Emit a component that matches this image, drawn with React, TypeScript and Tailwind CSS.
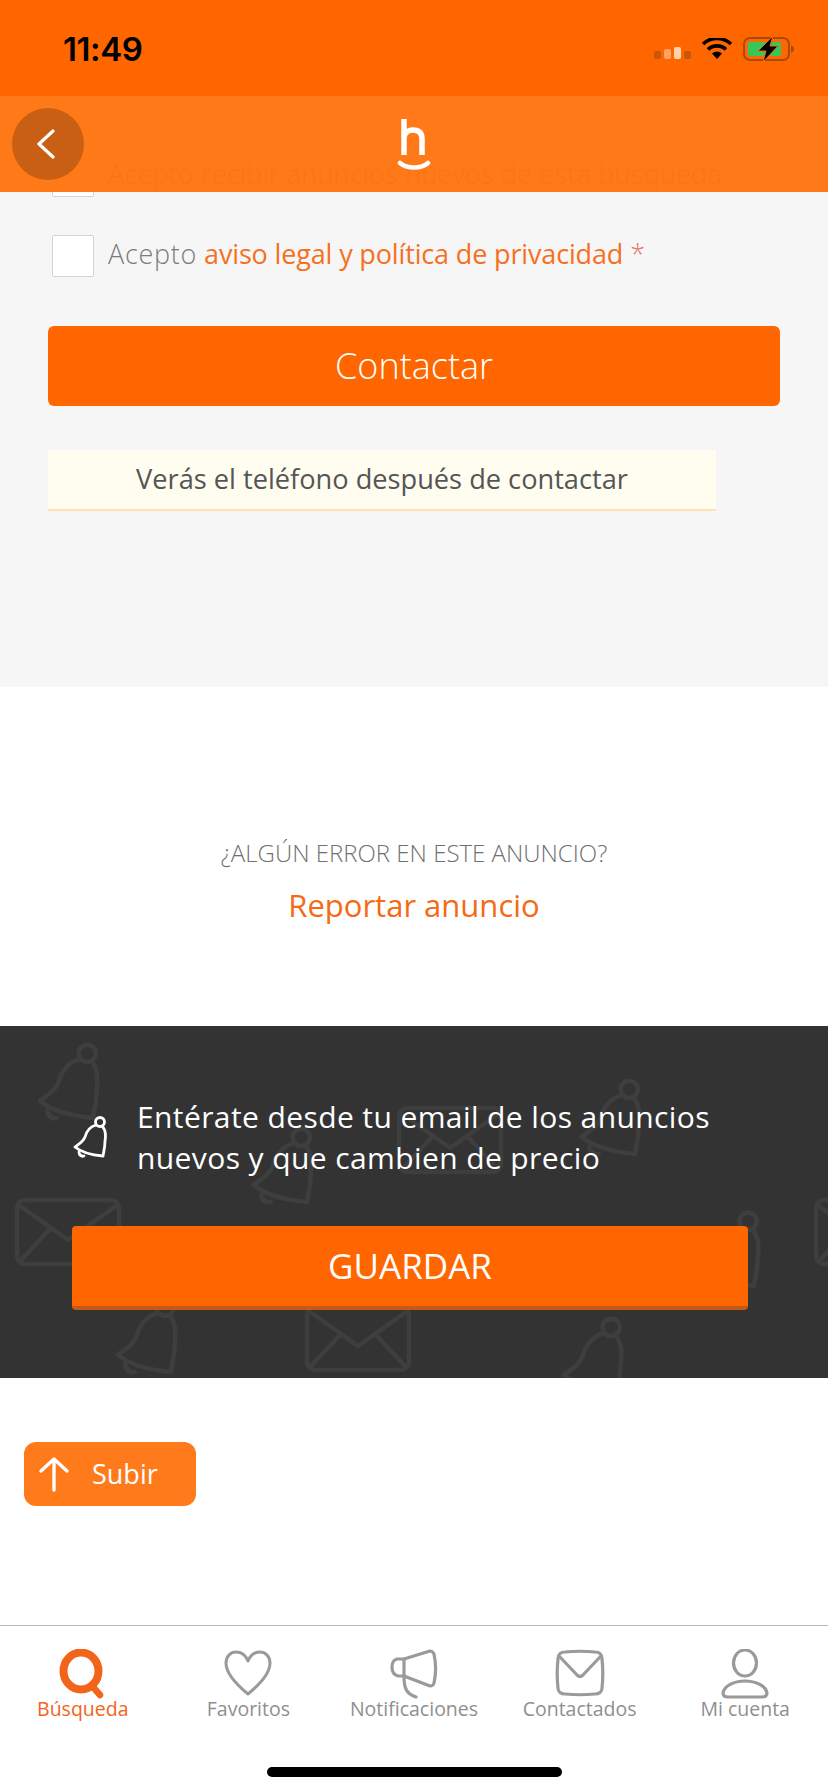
import React from 'react'

const ubuntu = "font-['Open_Sans','Noto_Sans',sans-serif]"

const Bell = ({ x, y, s = 1.9 }: { x: number; y: number; s?: number }) => (
  <g transform={`translate(${x} ${y}) scale(${s})`} fill="none" stroke="currentColor" strokeWidth="2.400" strokeLinejoin="round" strokeLinecap="round">
    <circle cx="28" cy="7" r="4.500" />
    <path d="M24 10c-7 2-10 8-11 12-2 5-6 7-10 10 6 5 16 8 28 9 1-6 2-9 2-15 1-6 0-12-3-15" />
    <path d="M7 37c0 3 2 5 5 4" fill="currentColor" />
  </g>
)

const Mail = ({ x, y }: { x: number; y: number }) => (
  <g transform={`translate(${x} ${y})`} fill="none" stroke="currentColor" strokeWidth="4.500" strokeLinejoin="round" strokeLinecap="round">
    <rect x="0" y="0" width="102" height="64" rx="8" />
    <path d="M3 6l48 34 48-34M4 60l30-32M98 60L68 28" />
  </g>
)

const navItems = [
  {
    label: 'Búsqueda',
    active: true,
    icon: (
      <svg viewBox="0 0 50 50" className="w-[50px] h-[50px]" fill="none" stroke="#f26419" strokeLinecap="round">
        <ellipse cx="23" cy="22" rx="17.500" ry="18.500" strokeWidth="8" />
        <path d="M35 38l7 8" strokeWidth="6.500" />
      </svg>
    ),
  },
  {
    label: 'Favoritos',
    icon: (
      <svg viewBox="0 0 50 50" className="w-[50px] h-[50px]" fill="none" stroke="#9a9a9a" strokeWidth="3" strokeLinejoin="round" strokeLinecap="round">
        <path d="M25 45C14 36 3 25 3 14 3 7 8 3 13 3c6 0 10 4 12 9 2-5 6-9 12-9 5 0 10 4 10 11 0 11-11 22-22 31z" />
      </svg>
    ),
  },
  {
    label: 'Notificaciones',
    icon: (
      <svg viewBox="0 0 50 50" className="w-[50px] h-[50px]" fill="none" stroke="#9a9a9a" strokeWidth="3.200" strokeLinejoin="round" strokeLinecap="round">
        <path d="M15 10L41 2c2 0 3 1 4 3 2 9 2 20 0 29-1 3-2 3-4 3L15 27" />
        <path d="M15 10H8c-4 1-5 4-5 8 0 5 2 8 6 9h6M15 10v18c0 12 3 17 12 20" />
      </svg>
    ),
  },
  {
    label: 'Contactados',
    icon: (
      <svg viewBox="0 0 50 50" className="w-[50px] h-[50px]" fill="none" stroke="#9a9a9a" strokeWidth="3.200" strokeLinejoin="round" strokeLinecap="round">
        <path d="M3 10c0-5 3-7 7-7 10-1 20-1 30 0 4 0 7 2 7 7 1 9 1 20 0 29 0 4-3 6-7 6-10 1-20 1-30 0-4 0-7-2-7-6-1-9-1-20 0-29z" />
        <path d="M5 8l17 18c2 2 4 2 6 0L45 8" />
      </svg>
    ),
  },
  {
    label: 'Mi cuenta',
    icon: (
      <svg viewBox="0 0 50 50" className="w-[50px] h-[50px]" fill="none" stroke="#9a9a9a" strokeWidth="3.200" strokeLinejoin="round">
        <ellipse cx="25" cy="14" rx="11.500" ry="13" />
        <path d="M25 32c-11 0-21 5-22 12 0 3 2 4 5 4h34c3 0 5-1 5-4-1-7-11-12-22-12z" />
      </svg>
    ),
  },
]

export default function App() {
  return (
    <div className={`relative w-[828px] h-[1792px] overflow-hidden bg-white flex flex-col ${ubuntu}`}>
      {/* status bar + translucent header, pinned over the scrolled page */}
      <div className="absolute top-0 left-0 right-0 z-10">
        <div className="h-[96px] bg-[#ff6600] flex items-center justify-between pl-[63px] pr-[33px] pt-[2px]">
          <span className="font-['Inter',sans-serif] text-[33px] font-semibold leading-none text-black tracking-[-0.4px]">11:49</span>
          <div className="flex items-center">
            <svg width="38" height="14" viewBox="0 0 38 14" className="mr-[9px] mt-[9px]">
              <rect x="0" y="4" width="7" height="8" rx="2" fill="#c9560a" />
              <rect x="10" y="2" width="7" height="10" rx="2" fill="#ffa366" />
              <rect x="20" y="0" width="7" height="12" rx="2" fill="#ffd2b0" />
              <rect x="30" y="4" width="7" height="8" rx="2" fill="#c9560a" />
            </svg>
            <svg width="32" height="22" viewBox="0 0 32 22" className="mr-[10px]">
              <path d="M16 21l-5-5.500a7 7 0 0 1 10 0z" fill="#000" />
              <path d="M7 11.500a13 13 0 0 1 18 0M2 6a20.500 20.500 0 0 1 28 0" fill="none" stroke="#000" strokeWidth="3.600" />
            </svg>
            <svg width="52" height="26" viewBox="0 0 52 26">
              <rect x="1" y="2" width="45" height="22" rx="6" fill="none" stroke="#a84a0c" strokeWidth="2" />
              <rect x="5" y="6" width="33" height="14" rx="2" fill="#34c759" />
              <path d="M48 9.500c2 .5 3 2 3 3.500s-1 3-3 3.500z" fill="#a84a0c" />
              <path d="M30 0L15 15h8l-3 11 15-16h-8z" fill="#000" stroke="#ff6600" strokeWidth="1" />
            </svg>
          </div>
        </div>
        <div className="relative h-[96px] bg-[#ff7410]/96 flex items-center justify-center">
          <button className="absolute left-[12px] top-[12px] w-[72px] h-[72px] rounded-full bg-[#c95f14] flex items-center justify-center">
            <svg width="20" height="30" viewBox="0 0 20 30" fill="none" stroke="#fff" strokeWidth="3.200" strokeLinecap="round" strokeLinejoin="round" className="mr-[5px]">
              <path d="M17 2L3 15l14 13" />
            </svg>
          </button>
          <svg width="34" height="56" viewBox="0 0 34 56" fill="none" stroke="#fff" className="mt-[3px]">
            <path d="M7 1v36" strokeWidth="5.500" />
            <path d="M7 19c1-5 5-7 9-7 6 0 9 3 9 9v16" strokeWidth="5.500" />
            <path d="M3 45c7 6 21 6 28 0" strokeWidth="4.500" strokeLinecap="round" />
          </svg>
        </div>
      </div>

      {/* form section */}
      <section className="h-[687px] shrink-0 bg-[#f6f6f6] px-[48px] pt-[155px] flex flex-col">
        <label className="flex items-center gap-[14px] pl-[4px] h-[42px]">
          <span className="w-[42px] h-[42px] bg-white border border-[#d4d4d4] rounded-[2px] shrink-0" />
          <span className="text-[27px] leading-none font-light text-[#7c7c7c] tracking-[0.2px] mb-[6px]">Acepto recibir anuncios nuevos de esta búsqueda</span>
        </label>
        <label className="flex items-center gap-[14px] pl-[4px] h-[42px] mt-[38px]">
          <span className="w-[42px] h-[42px] bg-white border border-[#d4d4d4] rounded-[2px] shrink-0" />
          <span className="text-[27px] leading-none font-light text-[#7c7c7c] mb-[6px]">
            <span className="tracking-[0.7px]">Acepto</span>{' '}
            <span className="text-[#f5701f] font-normal tracking-[-0.15px]">aviso legal y política de privacidad</span>{' '}
            <span className="text-[#e57373]">*</span>
          </span>
        </label>
        <button className="mt-[49px] w-[732px] h-[80px] rounded-[6px] bg-[#ff6600] text-white text-[36px] font-light">Contactar</button>
        <div className="mt-[44px] w-[668px] h-[61px] bg-[#fffcf0] border-b-2 border-[#ffe2b3] flex items-center justify-center text-[27.200px] text-[#555]">
          Verás el teléfono después de contactar
        </div>
      </section>

      {/* report */}
      <section className="h-[339px] shrink-0 flex flex-col items-center pt-[146px]">
        <p className="text-[24px] leading-[40px] font-light text-[#707070]">¿ALGÚN ERROR EN ESTE ANUNCIO?</p>
        <a className="text-[31px] leading-[44px] mt-[10px] text-[#f56a14]">Reportar anuncio</a>
      </section>

      {/* save search banner */}
      <section className="relative h-[352px] shrink-0 bg-[#333] overflow-hidden px-[72px] pt-[70px]">
        <svg className="absolute inset-0 w-full h-full text-[#3e3e3e]" viewBox="0 0 828 352">
          <Bell x={34} y={14} />
          <Bell x={576} y={50} />
          <Bell x={248} y={98} />
          <Mail x={399} y={82} />
          <Mail x={17} y={174} />
          <Bell x={695} y={182} />
          <Bell x={112} y={268} />
          <Mail x={307} y={280} />
          <Bell x={558} y={288} />
          <Mail x={816} y={174} />
        </svg>
        <div className="relative flex items-center gap-[29px]">
          <svg width="36" height="44" viewBox="0 0 36 44" fill="none" stroke="#fff" strokeWidth="2.800" strokeLinejoin="round" strokeLinecap="round" className="shrink-0">
            <circle cx="28" cy="7" r="4.500" />
            <path d="M24 10c-7 2-10 8-11 12-2 5-6 7-10 10 6 5 16 8 28 9 1-6 2-9 2-15 1-6 0-12-3-15" />
            <path d="M7 37c0 3 2 5 5 4" fill="#fff" />
          </svg>
          <p className="text-[30px] leading-[41px] text-white tracking-[0.4px]">
            Entérate desde tu email de los anuncios
            <br />
            nuevos y que cambien de precio
          </p>
        </div>
        <button className="relative mt-[48px] w-[676px] h-[84px] rounded-[4px] bg-[#ff6600] border-b-[4px] border-[#c25a17] text-white text-[35px]">
          GUARDAR
        </button>
      </section>

      {/* back to top */}
      <div className="pl-[24px] pt-[64px]">
        <button className="w-[172px] h-[64px] rounded-[12px] bg-[#ff7a1a] flex items-center pl-[14px] gap-[22px] text-white text-[27px]">
          <svg width="32" height="36" viewBox="0 0 32 36" fill="none" stroke="#fff" strokeWidth="3.400" strokeLinecap="round" strokeLinejoin="round">
            <path d="M16 34V3M3 15L16 3l13 12" />
          </svg>
          Subir
        </button>
      </div>

      {/* tab bar */}
      <nav className="mt-auto h-[167px] border-t border-[#b9b9b9] relative">
        <div className="grid grid-cols-5 pt-[23px]">
          {navItems.map((item) => (
            <div key={item.label} className="flex flex-col items-center">
              {item.icon}
              <span className={`text-[19.5px] leading-[24px] -mt-[2px] whitespace-nowrap ${item.active ? 'text-[#f26419]' : 'text-[#8f8f8f]'}`}>
                {item.label}
              </span>
            </div>
          ))}
        </div>
        <div className="absolute left-[267px] top-[141px] w-[295px] h-[10px] rounded-full bg-black" />
      </nav>
    </div>
  )
}
